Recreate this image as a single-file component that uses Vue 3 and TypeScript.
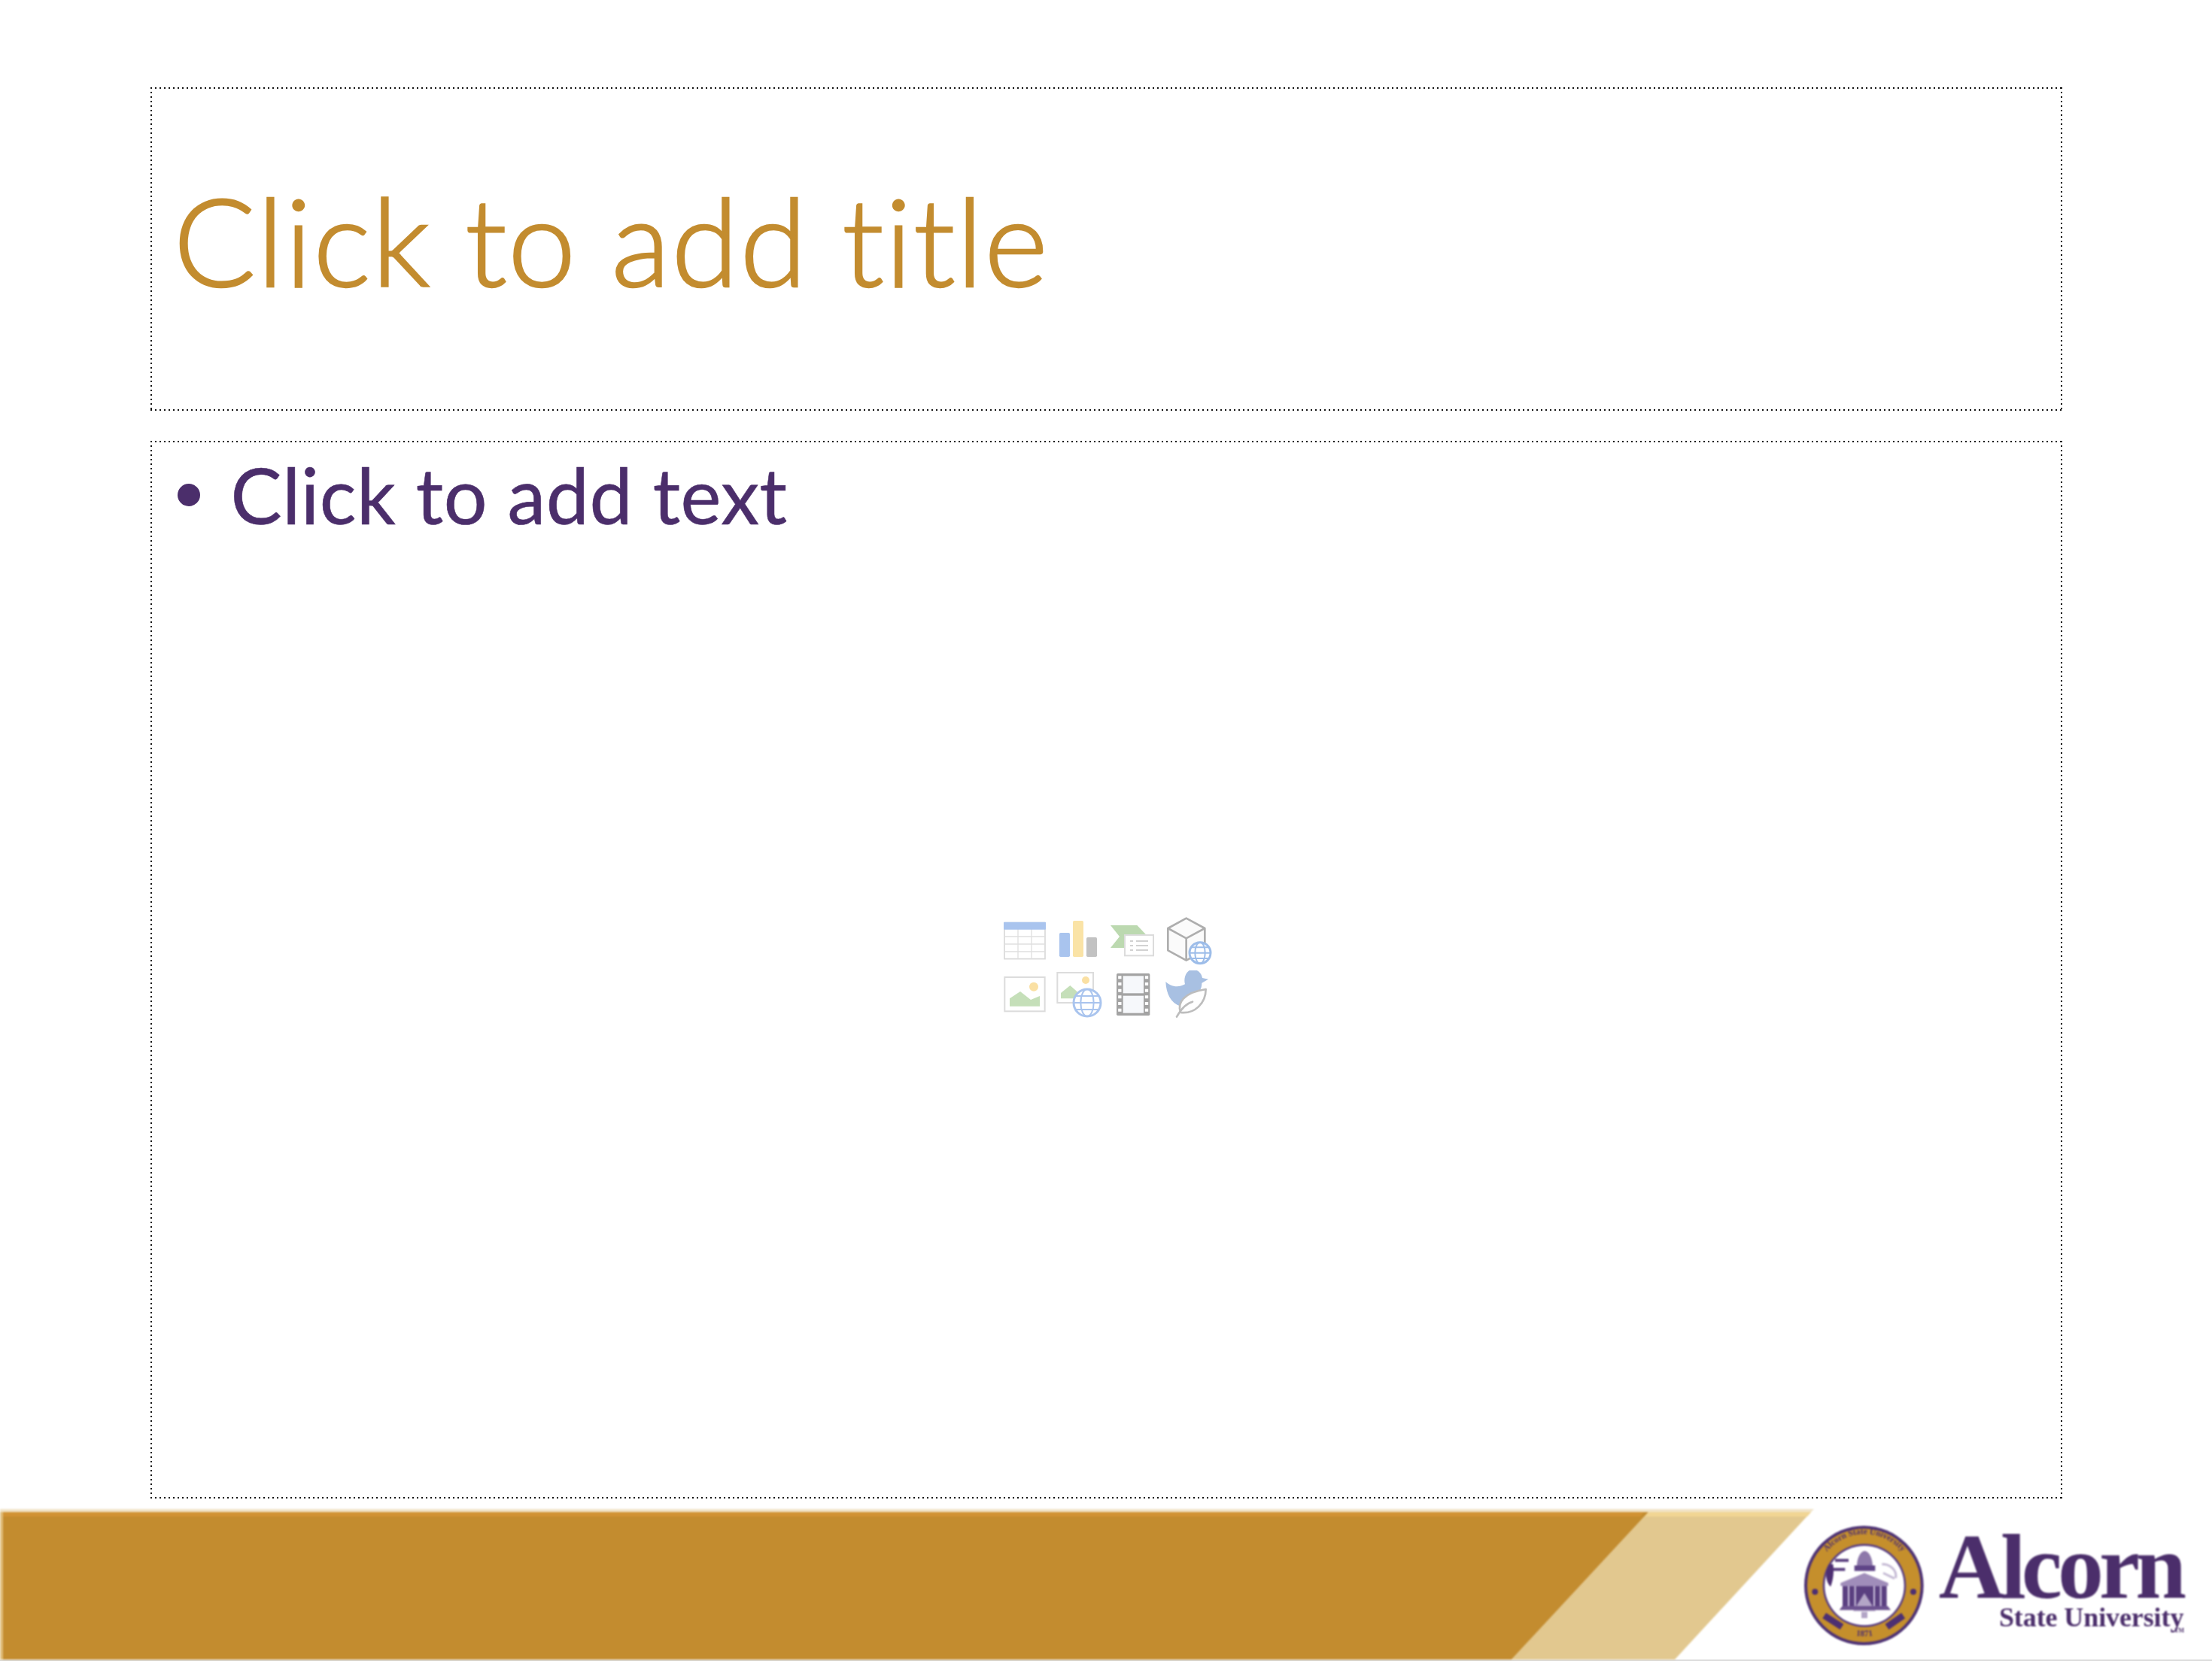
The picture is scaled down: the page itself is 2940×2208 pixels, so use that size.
<script setup lang="ts">
const sealTop = 'Alcorn State University'
const sealBottom = '1871'
</script>

<template>
  <div class="slide">
    <div class="placeholder title-box">
      <h1 class="title">Click to add title</h1>
    </div>

    <div class="placeholder body-box">
      <div class="bullet-row">
        <span class="bullet"></span>
        <span class="bullet-text">Click to add text</span>
      </div>

      <svg class="content-icons" viewBox="0 0 1080 570" width="360" height="190">
        <!-- table -->
        <rect x="135" y="110" width="162" height="144" fill="#fff" stroke="#d9d9d9" stroke-width="5" />
        <path d="M189 135V254M243 135V254M135 165H297M135 195H297M135 225H297" stroke="#e0e0e0" stroke-width="4" fill="none" />
        <rect x="132" y="107" width="168" height="30" rx="3" fill="#a9c4ee" />
        <!-- chart -->
        <rect x="354" y="150" width="42" height="96" rx="5" fill="#a9c4ee" />
        <rect x="408" y="102" width="42" height="144" rx="5" fill="#fae3a6" />
        <rect x="462" y="168" width="42" height="78" rx="5" fill="#c2c2c2" />
        <!-- smart art -->
        <path d="M558 120H664L702 160V210H558L594 165Z" fill="#bcd9b0" />
        <rect x="615" y="159" width="114" height="82" fill="#fff" stroke="#dcdcdc" stroke-width="6" />
        <path d="M636 183H648M660 183H708M636 201H648M660 201H708M636 219H648M660 219H708" stroke="#c4c4c4" stroke-width="5" fill="none" />
        <!-- 3d model online -->
        <path d="M860 92L934 132V220L860 260L787 220V132Z" fill="#fbfbfb" stroke="#aeaeae" stroke-width="8" stroke-linejoin="round" />
        <path d="M787 132L860 172L934 132M860 172V260" fill="none" stroke="#aeaeae" stroke-width="8" />
        <circle cx="915" cy="230" r="42" fill="#fff" stroke="#9dbde9" stroke-width="9" />
        <ellipse cx="915" cy="230" rx="20" ry="42" fill="none" stroke="#9dbde9" stroke-width="6" />
        <path d="M872 230H958M880 208H950M880 252H950" stroke="#9dbde9" stroke-width="6" />
        <!-- picture -->
        <rect x="136" y="327" width="160" height="136" fill="#fff" stroke="#dcdcdc" stroke-width="6" />
        <circle cx="252" cy="365" r="18" fill="#fae0a3" />
        <path d="M156 412L198 384L240 417L276 402V443H156Z" fill="#c5dfb9" />
        <!-- online picture -->
        <rect x="346" y="309" width="143" height="120" fill="#fff" stroke="#dcdcdc" stroke-width="6" />
        <circle cx="459" cy="339" r="15" fill="#fae0a3" />
        <path d="M360 390L397 360L425 385V412H360Z" fill="#c5dfb9" />
        <circle cx="465" cy="429" r="54" fill="#fff" stroke="#a9c4ee" stroke-width="9" />
        <ellipse cx="465" cy="429" rx="26" ry="54" fill="none" stroke="#a9c4ee" stroke-width="6" />
        <path d="M411 429H519M420 402H510M420 456H510" stroke="#a9c4ee" stroke-width="6" />
        <!-- video -->
        <rect x="582" y="312" width="133" height="168" rx="5" fill="#a3a3a3" />
        <rect x="608" y="322" width="82" height="69" fill="#f6f8fb" />
        <rect x="608" y="401" width="82" height="69" fill="#f6f8fb" />
        <path d="M595 322V470M702 322V470" stroke="#fff" stroke-width="13" stroke-dasharray="12 14" />
        <!-- 3d model -->
        <path d="M778 345C795 362 825 372 855 355C850 335 855 312 872 300H902C915 306 922 318 924 330L948 335L922 350C922 365 918 372 915 380L835 442C800 430 780 395 778 345Z" fill="#a8c0e2" />
        <path d="M938 375C938 430 895 474 838 468C822 430 850 388 938 375Z" fill="#fff" stroke="#bdbdbd" stroke-width="8" stroke-linejoin="round" />
        <path d="M822 485C838 455 858 432 885 425" fill="none" stroke="#bdbdbd" stroke-width="8" stroke-linecap="round" />
      </svg>
    </div>

    <footer class="banner">
      <svg class="stripes" viewBox="0 0 2940 196" preserveAspectRatio="none">
        <path d="M0 -4H2411L2407 0H0Z" fill="#e2c88f" opacity="0.5" />
        <path d="M2191 0H2407L2226 196H2009Z" fill="#e2c88f" />
        <path d="M0 0H2191L2009 196H0Z" fill="#c38c2f" />
        <path d="M4 0H2185L2180 6H4Z" fill="#d19233" />
        <path d="M2191 0H2407L2402 6H2186Z" fill="#f1d593" />
        <rect width="4" height="196" fill="#e0bd7a" />
      </svg>

      <div class="logo">
        <svg class="seal" viewBox="40 36 510 510" width="170" height="170">
          <defs>
            <path id="ring-top" d="M108 335A195 195 0 1 1 482 335" />
            <path id="ring-bottom" d="M190 462A195 195 0 0 0 400 462" />
          </defs>
          <circle cx="293" cy="290" r="238" fill="#4f3375" />
          <circle cx="293" cy="290" r="226" fill="#c58f2c" />
          <circle cx="295" cy="290" r="166" fill="#5d4283" />
          <circle cx="295" cy="290" r="158" fill="#fff" />
          <text class="ring-text"><textPath href="#ring-top" startOffset="50%" text-anchor="middle">{{ sealTop }}</textPath></text>
          <text class="ring-text"><textPath href="#ring-bottom" startOffset="50%" text-anchor="middle">{{ sealBottom }}</textPath></text>
          <circle cx="98" cy="315" r="12" fill="#4d2f72" />
          <circle cx="490" cy="315" r="12" fill="#4d2f72" />
          <!-- wreaths -->
          <path d="M135 410L205 455" stroke="#4d2f72" stroke-width="26" />
          <path d="M450 410L385 455" stroke="#4d2f72" stroke-width="26" />
          <!-- hall -->
          <path d="M265 228C262 190 275 155 296 152C318 155 330 190 328 228Z" fill="#8d78aa" />
          <path d="M255 210H338V232H255Z" fill="#5f4587" />
          <path d="M200 280L295 240L390 280V292H200Z" fill="#a08dba" />
          <path d="M208 292H384V378H208Z" fill="#5a3f80" />
          <path d="M232 292V378M258 292V378M334 292V378M360 292V378" stroke="#cfc5de" stroke-width="6" />
          <path d="M295 320L340 392H250Z" fill="#b3a5c6" />
          <path d="M195 388H400L388 372H207Z" fill="#6d5390" />
          <path d="M295 395V420" stroke="#b3a5c6" stroke-width="24" />
          <!-- trees left and right of the hall -->
          <path d="M178 190H232M170 226H218" stroke="#5a3f80" stroke-width="12" />
          <path d="M155 205C135 235 140 275 160 295C170 270 175 235 170 205Z" fill="#4d2f72" />
          <path d="M365 205C395 205 425 225 420 260M370 240L415 262" stroke="#c5bad4" stroke-width="9" fill="none" />
        </svg>

        <div class="wordmark">
          <span class="alcorn">Alcorn</span>
          <span class="state">State University<span class="tm">TM</span></span>
        </div>
      </div>
    </footer>
    <div class="edge"></div>
  </div>
</template>

<style scoped>
.slide {
  width: 2940px;
  height: 2208px;
  box-sizing: border-box;
  padding-top: 116px;
  display: flex;
  flex-direction: column;
  align-items: center;
  background: #fff;
  overflow: hidden;
}

.placeholder {
  width: 2541px;
  box-sizing: border-box;
  background-image:
    linear-gradient(90deg, #111 2px, transparent 2px),
    linear-gradient(90deg, #111 2px, transparent 2px),
    linear-gradient(#111 2px, transparent 2px),
    linear-gradient(#111 2px, transparent 2px);
  background-repeat: repeat-x, repeat-x, repeat-y, repeat-y;
  background-size: 6px 2px, 6px 2px, 2px 6px, 2px 6px;
  background-position: 0 0, 0 100%, 0 0, 100% 0;
}

.title-box {
  height: 430px;
  flex: none;
  display: flex;
  align-items: center;
  padding-left: 31px;
}

.title {
  margin: 0;
  padding-bottom: 25px;
  font: 300 162px/1 Lato, "Liberation Sans", sans-serif;
  font-variant-ligatures: none;
  letter-spacing: 1.5px;
  -webkit-text-stroke: 2.5px #c38c2f;
  color: #c38c2f;
  white-space: nowrap;
}

.body-box {
  position: relative;
  height: 1406px;
  margin-top: 40px;
  flex: none;
  padding: 11px 0 0 36px;
}

.bullet-row {
  display: flex;
  align-items: center;
  gap: 41px;
}

.bullet {
  width: 30px;
  height: 30px;
  border-radius: 50%;
  background: #4b2e6b;
}

.bullet-text {
  font: 400 102px/1.2 Lato, "Liberation Sans", sans-serif;
  font-variant-ligatures: none;
  letter-spacing: 0.5px;
  -webkit-text-stroke: 0.6px #4b2e6b;
  color: #4b2e6b;
  white-space: nowrap;
}

.content-icons {
  position: absolute;
  left: 1090px;
  top: 604px;
  filter: blur(0.7px);
}

.banner {
  position: relative;
  width: 100%;
  height: 196px;
  margin-top: 18px;
  flex: none;
  display: flex;
  justify-content: flex-end;
}

.stripes {
  position: absolute;
  inset: 0;
  width: 100%;
  height: 100%;
  overflow: visible;
  filter: blur(1px);
}

.logo {
  position: relative;
  display: flex;
  align-items: flex-start;
  padding: 13px 40px 0 0;
  gap: 14px;
}

.seal {
  filter: blur(1.3px);
}

.ring-text {
  font: 700 34px "Liberation Serif", serif;
  fill: #4d2f72;
}

.wordmark {
  display: flex;
  flex-direction: column;
  align-items: flex-end;
  filter: blur(0.8px);
}

.alcorn {
  font: 700 122px/100px "Liberation Serif", serif;
  letter-spacing: -6px;
  color: #4b2e6b;
  margin-top: 10px;
}

.state {
  font: 700 36px/1 "Liberation Serif", serif;
  color: #4b2e6b;
  margin-top: -1px;
  margin-right: -3px;
  letter-spacing: -0.1px;
}

.tm {
  font-size: 8px;
  vertical-align: -8px;
  margin-left: -12px;
}

.edge {
  width: 100%;
  height: 2px;
  flex: none;
  background: #dcdcdc;
}
</style>

<style>
body {
  background: #fff;
}
</style>
